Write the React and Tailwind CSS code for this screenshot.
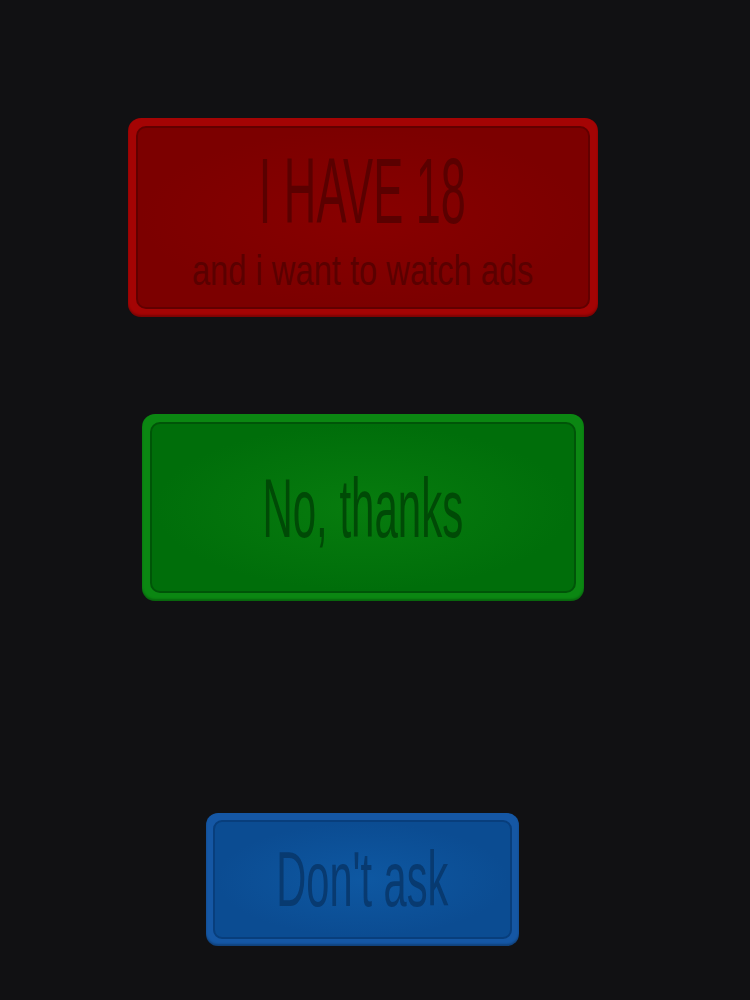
export default function App() {
  return (
    <div className="min-h-[1000px] w-[750px] bg-[#111113] font-['Liberation_Sans',Arial,sans-serif]">
      <div className="flex w-[725px] flex-col items-center pt-[118px]">
        {/* age confirm */}
        <button className="h-[199px] w-[470px] rounded-[13px] bg-[#a40404] p-[8px] shadow-[inset_0_-2px_2px_rgba(0,0,0,0.25)]">
          <div className="flex h-full w-full flex-col items-center justify-start rounded-[10px] border-2 border-[#620000] bg-[radial-gradient(ellipse_at_center,#880000_0%,#7c0000_70%)] pt-[17px]">
            <span className="block h-[92px] scale-x-[0.49] whitespace-nowrap text-[92px] leading-none text-[#5a0000]">
              I HAVE 18
            </span>
            <span className="mt-[12px] block scale-x-[0.76] whitespace-nowrap text-[43px] leading-none text-[#5a0000]">
              and i want to watch ads
            </span>
          </div>
        </button>

        <button className="mt-[97px] h-[187px] w-[442px] rounded-[13px] bg-[#0b8712] p-[8px] shadow-[inset_0_-2px_2px_rgba(0,0,0,0.25)]">
          <div className="flex h-full w-full items-center justify-center rounded-[10px] border-2 border-[#005508] bg-[radial-gradient(ellipse_at_center,#077c0e_0%,#006e0a_70%)]">
            <span className="inline-block scale-x-[0.5] whitespace-nowrap text-[84px] leading-none text-[#004a06]">
              No, thanks
            </span>
          </div>
        </button>

        <button className="mt-[212px] h-[133px] w-[313px] rounded-[12px] bg-[#1557a4] p-[7px] shadow-[inset_0_-2px_2px_rgba(0,0,0,0.25)]">
          <div className="flex h-full w-full items-center justify-center rounded-[9px] border-2 border-[#083e7c] bg-[radial-gradient(ellipse_at_center,#0e58a2_0%,#0b4c92_70%)]">
            <span className="inline-block scale-x-[0.54] whitespace-nowrap text-[77px] leading-none text-[#083a70]">
              Don't ask
            </span>
          </div>
        </button>
      </div>
    </div>
  );
}
